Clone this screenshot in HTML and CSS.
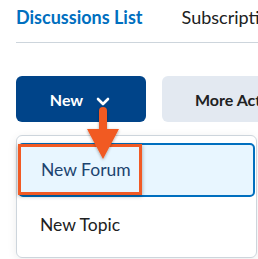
FILE: index.html
```html
<!DOCTYPE html>
<html lang="en">
<head>
    <meta charset="UTF-8">
    <title>Discussions</title>
    <link rel="stylesheet" href="styles.css">
</head>
<body>
    <div class="tabs">
        <span class="tab active">Discussions List</span>
        <span class="tab">Subscriptions</span>
    </div>
    <div class="actions">
        <button class="btn btn-primary">New
            <svg class="chevron" width="14" height="9" viewBox="0 0 14 9"><path d="M2 2 L7 7 L12 2" fill="none" stroke="#fff" stroke-width="2.6" stroke-linecap="round" stroke-linejoin="round"/></svg>
        </button>
        <button class="btn btn-secondary">More Actions</button>
    </div>
    <div class="menu">
        <div class="menu-item selected">New Forum</div>
        <div class="menu-item">New Topic</div>
    </div>
    <div class="callout"></div>
    <svg class="arrow" width="40" height="60" viewBox="0 0 40 60">
        <defs>
            <filter id="sh" x="-30%" y="-30%" width="160%" height="160%">
                <feDropShadow dx="0" dy="1" stdDeviation="1.5" flood-color="#000" flood-opacity="0.35"/>
            </filter>
        </defs>
        <g filter="url(#sh)" fill="#f15a24">
            <rect x="16" y="4" width="8" height="26" rx="4"/>
            <polygon points="4,26 36,26 20,56"/>
        </g>
    </svg>
</body>
</html>
```

FILE: styles.css
```css
body {
    margin: 0;
    font-family: 'Lato', sans-serif;
    background: #fff;
    color: #202122;
    width: 258px;
    height: 259px;
    overflow: hidden;
    position: relative;
}
.tabs {
    margin-left: 16px;
    display: flex;
    gap: 39px;
    height: 42px;
    border-bottom: 1px solid #cdd5dc;
    white-space: nowrap;
    overflow: hidden;
}
.tab {
    font-size: 18px;
    padding-top: 6px;
    flex-shrink: 0;
}
.tab.active {
    color: #006fbf;
    font-weight: 700;
}
.actions {
    display: flex;
    gap: 16px;
    margin: 33px 0 0 16px;
    white-space: nowrap;
    overflow: hidden;
}
.btn {
    flex-shrink: 0;
    height: 46px;
    border: none;
    border-radius: 6px;
    font-family: 'Lato', sans-serif;
    font-size: 16px;
    font-weight: 700;
}
.btn-primary {
    width: 130px;
    background: #004489;
    color: #fff;
    display: flex;
    align-items: center;
    justify-content: center;
    gap: 13px;
    padding-left: 4px;
}
.chevron {
    margin-top: 5px;
}
.btn-secondary {
    width: 140px;
    background: #e3e9f1;
    color: #202122;
    text-align: left;
    padding-left: 33px;
}
.menu {
    margin: 13px 0 0 16px;
    width: 241px;
    height: 123px;
    border: 1px solid #cdd5dc;
    border-radius: 6px;
    padding-top: 7px;
    box-sizing: border-box;
    box-shadow: 0 2px 10px rgba(0, 0, 0, 0.08);
}
.menu-item {
    height: 54px;
    padding-left: 23px;
    display: flex;
    align-items: center;
    font-size: 17.5px;
    box-sizing: border-box;
}
.menu-item.selected {
    margin: 0 1px;
    padding-left: 21px;
    background: #e8f6ff;
    border: 2px solid #006fbf;
    border-radius: 5px;
    color: #1c4470;
    padding-bottom: 2px;
}
.callout {
    position: absolute;
    left: 18px;
    top: 144px;
    width: 124px;
    height: 51px;
    box-sizing: border-box;
    border: 3px solid #f15a24;
    box-shadow: 0 1px 4px rgba(0, 0, 0, 0.35);
}
.arrow {
    position: absolute;
    left: 83px;
    top: 103px;
}
```
